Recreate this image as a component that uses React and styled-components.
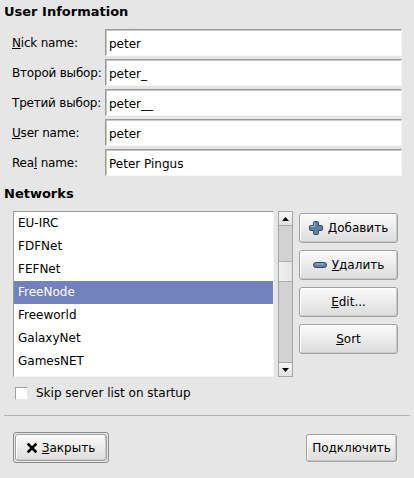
import React from 'react';
import styled, { createGlobalStyle } from 'styled-components';

const GlobalStyle = createGlobalStyle`
  html, body {
    margin: 0;
    padding: 0;
    background: #e6e6e6;
  }
  body {
    font-family: "DejaVu Sans", "Noto Sans", sans-serif;
    font-size: 12px;
    color: #000;
  }
`;

const Window = styled.div`
  width: 414px;
  height: 478px;
  box-sizing: border-box;
  padding: 4px 4px 0;
  background: #e6e6e6;
`;

const SectionTitle = styled.h2`
  margin: ${p => p.$top || 0}px 0 0;
  font-size: 13px;
  font-weight: bold;
  line-height: 16px;
`;

const Form = styled.div`
  display: grid;
  grid-template-columns: 93px 1fr;
  grid-auto-rows: 27px;
  row-gap: 3px;
  margin-top: 9px;
  padding: 0 8px;
`;

const Label = styled.label`
  display: flex;
  align-items: center;
  line-height: 16px;
  white-space: nowrap;
  letter-spacing: -0.2px;
`;

const Entry = styled.input`
  box-sizing: border-box;
  width: 100%;
  height: 27px;
  margin: 0;
  padding: 2px 3px 0;
  font: 12px "DejaVu Sans", sans-serif;
  color: #000;
  background: #fff;
  border: 1px solid;
  border-color: #9a9a9a #f6f6f6 #f6f6f6 #9a9a9a;
  box-shadow: inset 1px 1px 0 #c6c6c6;
  outline: none;
`;

const NetRow = styled.div`
  display: flex;
  margin-top: 9px;
  padding-left: 9px;
`;

const List = styled.div`
  width: 261px;
  height: 166px;
  box-sizing: border-box;
  border: 1px solid;
  border-color: #9a9a9a #f4f4f4 #f4f4f4 #9a9a9a;
  background: #fff;
  overflow: hidden;
`;

const ListItem = styled.div`
  height: 23px;
  line-height: 23px;
  padding-left: 4px;
  background: ${p => (p.$selected ? '#7282be' : 'transparent')};
  color: ${p => (p.$selected ? '#fff' : '#000')};
`;

const Scrollbar = styled.div`
  width: 15px;
  height: 166px;
  margin-left: 4px;
  box-sizing: border-box;
  display: flex;
  flex-direction: column;
  border: 1px solid #a6a6a6;
  background: #d2d2d2;
`;

const Stepper = styled.div`
  height: 13px;
  display: flex;
  align-items: center;
  justify-content: center;
  background: linear-gradient(#f6f6f6, #e2e2e2);
  border-${p => (p.$down ? 'top' : 'bottom')}: 1px solid #a6a6a6;
`;

const Track = styled.div`
  flex: 1;
  display: flex;
  flex-direction: column;
`;

const Thumb = styled.div`
  height: 19px;
  margin-top: 35px;
  background: linear-gradient(90deg, #f2f2f2, #e4e4e4);
  border-top: 1px solid #b0b0b0;
  border-bottom: 1px solid #b0b0b0;
`;

const ButtonColumn = styled.div`
  width: 99px;
  margin-left: 6px;
  padding-top: 2px;
  display: flex;
  flex-direction: column;
  gap: 7px;
`;

const Button = styled.button`
  box-sizing: border-box;
  height: ${p => p.$h || 30}px;
  width: ${p => (p.$w ? `${p.$w}px` : '100%')};
  display: flex;
  align-items: center;
  justify-content: center;
  gap: 5px;
  margin: 0;
  padding: 0 6px;
  font: 12px "DejaVu Sans", sans-serif;
  color: #000;
  border: 1px solid #a0a0a0;
  border-radius: 3px;
  background: linear-gradient(#fbfbfb, #dcdcdc);
  box-shadow: inset 1px 1px 0 #fff, inset -1px -1px 0 #cacaca;
`;

const DefaultRing = styled.div`
  box-sizing: border-box;
  width: 96px;
  height: 31px;
  padding: 1px;
  border: 1px solid #8c8c8c;
  border-radius: 3px;
  display: flex;
`;

const CheckRow = styled.div`
  display: flex;
  align-items: center;
  gap: 8px;
  line-height: 16px;
  margin-top: 8px;
  padding-left: 11px;
`;

const CheckBox = styled.span`
  flex: none;
  width: 13px;
  height: 13px;
  box-sizing: border-box;
  background: #fff;
  border: 1px solid;
  border-color: #a0a0a0 #e8e8e8 #e8e8e8 #a0a0a0;
`;

const Separator = styled.hr`
  margin: 14px 0 0;
  border: 0;
  border-top: 1px solid #b4b4b4;
  height: 0;
  width: 406px;
`;

const ActionRow = styled.div`
  display: flex;
  align-items: center;
  justify-content: space-between;
  margin-top: 16px;
  padding: 0 13px 0 9px;
`;

const PlusIcon = () => (
  <svg width="14" height="14" viewBox="0 0 14 14">
    <path
      d="M4.5 1.5 Q4.5 0.5 5.5 0.5 H8.5 Q9.5 0.5 9.5 1.5 V4.5 H12.5 Q13.5 4.5 13.5 5.5 V8.5 Q13.5 9.5 12.5 9.5 H9.5 V12.5 Q9.5 13.5 8.5 13.5 H5.5 Q4.5 13.5 4.5 12.5 V9.5 H1.5 Q0.5 9.5 0.5 8.5 V5.5 Q0.5 4.5 1.5 4.5 H4.5 Z"
      fill="#5f80a6"
      stroke="#36485e"
      strokeWidth="1"
    />
    <path d="M5.5 2 V5.5 H2" stroke="#a4bbd4" strokeWidth="1" fill="none" />
  </svg>
);

const MinusIcon = () => (
  <svg width="14" height="6" viewBox="0 0 14 6">
    <rect x="0.5" y="0.5" width="13" height="5" rx="2.5" fill="#5f80a6" stroke="#36485e" />
    <path d="M2.5 2 H11" stroke="#a4bbd4" strokeWidth="1" />
  </svg>
);

const CloseIcon = () => (
  <svg width="10" height="10" viewBox="0 0 10 10">
    <path d="M1.5 1.5 L8.5 8.5 M8.5 1.5 L1.5 8.5" stroke="#000" strokeWidth="2.6" strokeLinecap="square" />
  </svg>
);

const Arrow = ({ down }) => (
  <svg width="7" height="4" viewBox="0 0 7 4">
    <path d={down ? 'M0 0 H7 L3.5 4 Z' : 'M0 4 H7 L3.5 0 Z'} fill="#000" />
  </svg>
);

const fields = [
  { label: <><u>N</u>ick name:</>, value: 'peter' },
  { label: 'Второй выбор:', value: 'peter_' },
  { label: 'Третий выбор:', value: 'peter__' },
  { label: <><u>U</u>ser name:</>, value: 'peter' },
  { label: <>Rea<u>l</u>{' '}name:</>, value: 'Peter Pingus' },
];

const networks = ['EU-IRC', 'FDFNet', 'FEFNet', 'FreeNode', 'Freeworld', 'GalaxyNet', 'GamesNET'];

export default function App() {
  return (
    <>
      <GlobalStyle />
      <Window>
        <SectionTitle>User Information</SectionTitle>
        <Form>
          {fields.map((f, i) => (
            <React.Fragment key={i}>
              <Label><span>{f.label}</span></Label>
              <Entry value={f.value} readOnly />
            </React.Fragment>
          ))}
        </Form>

        <SectionTitle $top={10}>Networks</SectionTitle>
        <NetRow>
          <List>
            {networks.map(n => (
              <ListItem key={n} $selected={n === 'FreeNode'}>{n}</ListItem>
            ))}
          </List>
          <Scrollbar>
            <Stepper><Arrow /></Stepper>
            <Track><Thumb /></Track>
            <Stepper $down><Arrow down /></Stepper>
          </Scrollbar>
          <ButtonColumn>
            <Button><PlusIcon /><span><u>Д</u>обавить</span></Button>
            <Button><MinusIcon /><span><u>У</u>далить</span></Button>
            <Button><span><u>E</u>dit...</span></Button>
            <Button><span><u>S</u>ort</span></Button>
          </ButtonColumn>
        </NetRow>

        <CheckRow>
          <CheckBox />
          <span>Skip server list on startup</span>
        </CheckRow>

        <Separator />

        <ActionRow>
          <DefaultRing>
            <Button $h={27}><CloseIcon /><span><u>З</u>акрыть</span></Button>
          </DefaultRing>
          <Button $w={91} $h={28}>Подключить</Button>
        </ActionRow>
      </Window>
    </>
  );
}
